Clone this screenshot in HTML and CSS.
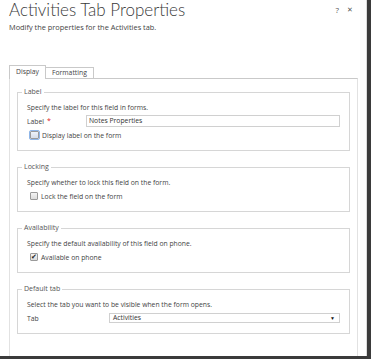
FILE: index.html
```html
<!DOCTYPE html>
<html lang="en">
<head>
    <meta charset="UTF-8">
    <meta name="viewport" content="width=device-width, initial-scale=1.0">
    <title>Activities Tab Properties</title>
    <link rel="stylesheet" href="styles.css">
</head>
<body>

    <div class="dialog">
        <div class="head">
            <div class="titles">
                <h1>Activities Tab Properties</h1>
                <p class="subtitle">Modify the properties for the Activities tab.</p>
            </div>
            <div class="actions">
                <span class="help">?</span>
                <span class="close">&#x2715;</span>
            </div>
        </div>

        <div class="tabs">
            <span class="tab active">Display</span>
            <span class="tab">Formatting</span>
        </div>

        <div class="panel">
            <fieldset class="group">
                <legend>Label</legend>
                <p class="hint">Specify the label for this field in forms.</p>
                <div class="row">
                    <span class="name label-col">Label<span class="req">*</span></span>
                    <span class="field">Notes Properties</span>
                </div>
                <div class="check">
                    <span class="box focused"></span>
                    <span>Display label on the form</span>
                </div>
            </fieldset>

            <fieldset class="group">
                <legend>Locking</legend>
                <p class="hint">Specify whether to lock this field on the form.</p>
                <div class="check">
                    <span class="box"></span>
                    <span>Lock the field on the form</span>
                </div>
            </fieldset>

            <fieldset class="group">
                <legend>Availability</legend>
                <p class="hint">Specify the default availability of this field on phone.</p>
                <div class="check">
                    <span class="box checked">&#x2714;</span>
                    <span>Available on phone</span>
                </div>
            </fieldset>

            <fieldset class="group">
                <legend>Default tab</legend>
                <p class="hint">Select the tab you want to be visible when the form opens.</p>
                <div class="row">
                    <span class="name tab-col">Tab</span>
                    <span class="field select">
                        <span>Activities</span>
                        <span class="arrow">&#x25BC;</span>
                    </span>
                </div>
            </fieldset>
        </div>
    </div>

</body>
</html>
```

FILE: styles.css
```css
body {
    margin: 0;
    background: #fff;
    font-family: 'Open Sans', sans-serif;
    color: #444;
}

.dialog {
    width: 367px;
    height: 356px;
    background: #fff;
    border-right: 4px solid #3b3b3b;
    border-bottom: 3px solid #3b3b3b;
    box-shadow: inset -1px 0 0 #dcdcdc;
    display: flex;
    flex-direction: column;
}

.head {
    display: flex;
    justify-content: space-between;
    padding: 0 14px 0 9px;
}

h1 {
    margin: 0;
    font-family: 'Lato', 'Open Sans', sans-serif;
    font-size: 17px;
    font-weight: 300;
    line-height: 20px;
    color: #3a3a3a;
}

.subtitle {
    margin: 2px 0 0;
    font-size: 7.4px;
    line-height: 10px;
    color: #444;
}

.actions {
    display: flex;
    gap: 8px;
    padding-top: 5px;
    font-size: 8px;
    line-height: 10px;
    color: #555;
}

.close {
    font-size: 7px;
}

.tabs {
    display: flex;
    align-items: flex-end;
    margin-top: 33px;
    padding-left: 9px;
}

.tab {
    border: 1px solid #c9c9c9;
    border-bottom: none;
    padding: 0 6px 1px;
    font-size: 6.8px;
    line-height: 9px;
    background: #fff;
}

.tab + .tab {
    border-left: none;
}

.tab.active {
    position: relative;
    z-index: 1;
    padding: 1px 6px 2px;
    line-height: 10px;
    margin-bottom: -1px;
    border-right: 1px solid #c9c9c9;
}

.panel {
    flex: 1;
    margin: 0 9px;
    padding: 8px 7px 0;
    border: 1px solid #e2e2e2;
    border-top-color: #c9c9c9;
    border-bottom: none;
}

.group {
    margin: 0 0 11px;
    padding: 5px 9px 8px;
    border: 1px solid #d6d6d6;
    min-width: 0;
}

legend {
    margin-left: -5px;
    padding: 0 2px;
    font-size: 7px;
    line-height: 10px;
    color: #555;
}

.hint {
    margin: 0;
    font-size: 6.8px;
    line-height: 12px;
}

.row {
    display: flex;
    align-items: center;
    height: 14px;
    font-size: 6.8px;
}

.name {
    flex: none;
}

.label-col {
    width: 59px;
}

.tab-col {
    width: 82px;
}

.req {
    color: #e0201b;
    margin-left: 3px;
    font-size: 7px;
    vertical-align: 1px;
}

.field {
    flex: 1;
    height: 12px;
    box-sizing: border-box;
    border: 1px solid #d0d0d0;
    padding: 0 2px;
    line-height: 10px;
    color: #333;
}

.select {
    height: 10px;
    line-height: 8px;
    display: flex;
    justify-content: space-between;
    padding: 0 4px 0 3px;
}

.arrow {
    font-size: 5px;
    color: #111;
}

.check {
    display: flex;
    align-items: center;
    gap: 3px;
    height: 14px;
    padding-left: 3px;
    font-size: 6.8px;
}

.box {
    width: 8px;
    height: 8px;
    box-sizing: border-box;
    border: 1px solid #9a9a9a;
    border-radius: 1px;
    background: linear-gradient(#f4f4f4, #dcdcdc);
    display: flex;
    align-items: center;
    justify-content: center;
}

.box.focused {
    width: 9px;
    outline: 1px solid #8fb6e8;
    background: linear-gradient(#eef3fa, #d6dde8);
}

.box.checked {
    font-size: 7px;
    line-height: 8px;
    color: #222;
}
```
